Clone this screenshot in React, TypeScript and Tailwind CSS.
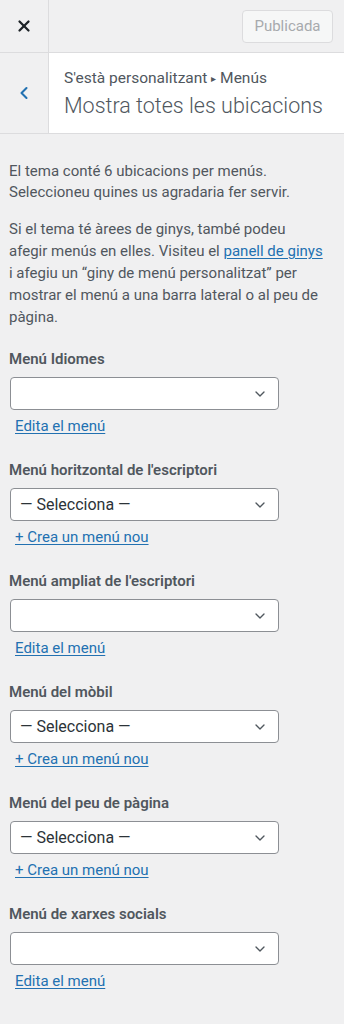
import { X, ChevronLeft, ChevronDown } from 'lucide-react';

type Location = {
  title: string;
  value: string;
  link: string;
};

const locations: Location[] = [
  { title: 'Menú Idiomes', value: '', link: 'Edita el menú' },
  { title: "Menú horitzontal de l'escriptori", value: '— Selecciona —', link: '+ Crea un menú nou' },
  { title: "Menú ampliat de l'escriptori", value: '', link: 'Edita el menú' },
  { title: 'Menú del mòbil', value: '— Selecciona —', link: '+ Crea un menú nou' },
  { title: 'Menú del peu de pàgina', value: '— Selecciona —', link: '+ Crea un menú nou' },
  { title: 'Menú de xarxes socials', value: '', link: 'Edita el menú' },
];

function TopBar() {
  return (
    <div className="flex h-[53px] shrink-0 border-b border-[#dcdcde] bg-[#f0f0f1]">
      <button className="flex w-[49px] items-center justify-center border-r border-[#dcdcde] text-[#1d2327]">
        <X size={18} strokeWidth={3} />
      </button>
      <div className="flex flex-1 items-center justify-end pr-[11px]">
        <div className="flex h-[33px] w-[91px] items-center justify-center rounded-[4px] border border-[#dcdcde] bg-[#f6f7f7] text-[15px] text-[#a7aaad]">
          Publicada
        </div>
      </div>
    </div>
  );
}

function SectionHeader() {
  return (
    <div className="flex h-[81px] shrink-0 border-b border-[#dcdcde] bg-white">
      <button className="flex w-[49px] items-center justify-center border-r border-[#dcdcde] bg-[#f0f0f1] text-[#2271b1]">
        <ChevronLeft size={20} strokeWidth={2.5} />
      </button>
      <div className="flex flex-col justify-center pl-[15px] pt-[1px]">
        <div className="text-[15.5px] leading-[20px] text-[#50575e]">
          S'està personalitzant <span className="text-[10px] align-[1px]">▸</span> Menús
        </div>
        <div className="mt-[4px] text-[21.5px] font-light leading-[26px] text-[#50575e]">
          Mostra totes les ubicacions
        </div>
      </div>
    </div>
  );
}

function MenuSelect({ value }: { value: string }) {
  return (
    <div className="flex h-[33px] w-[269px] items-center justify-between rounded-[4px] border border-[#8c8f94] bg-white pl-[9px] pr-[10px]">
      <span className="text-[16px] text-[#2c3338]">{value}</span>
      <ChevronDown size={16} strokeWidth={2} className="text-[#50575e]" />
    </div>
  );
}

function LocationControl({ loc }: { loc: Location }) {
  return (
    <div className="mb-[21px]">
      <div className="text-[15px] font-semibold leading-[24px] text-[#50575e]">{loc.title}</div>
      <div className="mt-[6px] ml-[1px]">
        <MenuSelect value={loc.value} />
      </div>
      <a className="mt-[6px] ml-[6px] inline-block text-[15px] leading-[21px] text-[#2271b1] underline underline-offset-2">
        {loc.link}
      </a>
    </div>
  );
}

export default function App() {
  return (
    <div
      className="flex min-h-[1024px] w-[344px] flex-col bg-[#f0f0f1]"
      style={{ fontFamily: 'Roboto, "Noto Sans", sans-serif' }}
    >
      <TopBar />
      <SectionHeader />
      <div className="pl-[9px] pr-[6px] pt-[27px] text-[15px] leading-[22px] text-[#50575e]">
        <p className="leading-[21px]">
          El tema conté 6 ubicacions per menús.
          <br />
          Seleccioneu quines us agradaria fer servir.
        </p>
        <p className="mt-[15px]">
          Si el tema té àrees de ginys, també podeu
          <br />
          afegir menús en elles. Visiteu el{' '}
          <a className="text-[#2271b1] underline underline-offset-2">panell de ginys</a>
          <br />
          i afegiu un “giny de menú personalitzat” per
          <br />
          mostrar el menú a una barra lateral o al peu de
          <br />
          pàgina.
        </p>
        <div className="mt-[19px]">
          {locations.map((loc) => (
            <LocationControl key={loc.title} loc={loc} />
          ))}
        </div>
      </div>
    </div>
  );
}
